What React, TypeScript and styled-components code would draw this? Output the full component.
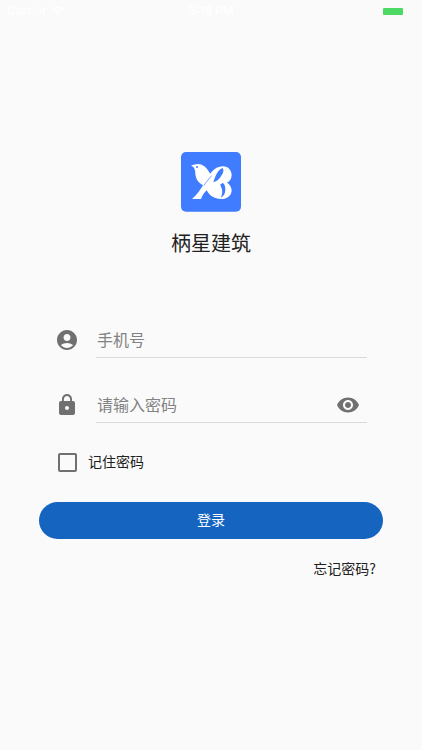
import React, { useState } from "react";
import styled, { createGlobalStyle } from "styled-components";
import { MdAccountCircle, MdLock, MdVisibility, MdWifi } from "react-icons/md";

const GlobalStyle = createGlobalStyle`
  *, *::before, *::after { box-sizing: border-box; }
  body {
    margin: 0;
    background: #fafafa;
    color: #212121;
    font-family: "Noto Sans CJK SC", sans-serif;
  }
  button, input { font: inherit; color: inherit; }
`;

const Page = styled.div`
  min-height: 100vh;
  display: flex;
  flex-direction: column;
`;

const StatusBar = styled.header`
  display: grid;
  grid-template-columns: 1fr auto 1fr;
  align-items: center;
  height: 22px;
  padding: 0 7px;
  color: #fff;
  font: 500 12px/22px Inter, sans-serif;
`;

const Carrier = styled.span`
  display: flex;
  align-items: center;
  gap: 4px;
`;

const Time = styled.span`
  font-weight: 600;
`;

const Battery = styled.span`
  justify-self: end;
  width: 20px;
  height: 7px;
  margin-right: 12px;
  border-radius: 1px;
  background: #4cd964;
`;

const Content = styled.main`
  display: flex;
  flex-direction: column;
  padding: 130px 39px 0;
`;

const Brand = styled.div`
  display: flex;
  flex-direction: column;
  align-items: center;
  gap: 16px;
  margin-bottom: 64px;
`;

const Title = styled.h1`
  margin: 0;
  font-size: 20px;
  line-height: 30px;
  font-weight: 400;
`;

const Form = styled.form`
  display: flex;
  flex-direction: column;
`;

const Fields = styled.div`
  display: flex;
  flex-direction: column;
  gap: 29px;
  padding: 0 16px;
`;

const Field = styled.div`
  display: flex;
  align-items: stretch;
  gap: 16px;
  height: 36px;
  color: #707070;
`;

const FieldIcon = styled.label`
  display: flex;
  align-items: center;
  padding-right: 1px;
`;

const InputLine = styled.div`
  flex: 1;
  display: flex;
  align-items: center;
  min-width: 0;
  padding-right: 7px;
  border-bottom: 1px solid #dadada;
`;

const Input = styled.input`
  flex: 1;
  min-width: 0;
  padding: 0 0 2px 1px;
  border: 0;
  outline: 0;
  background: none;
  color: #212121;
  font-size: 16px;
  line-height: 24px;
  &::placeholder { color: #828282; opacity: 1; }
`;

const IconButton = styled.button`
  display: flex;
  padding: 0;
  border: 0;
  background: none;
  color: #707070;
  cursor: pointer;
`;

const Remember = styled.label`
  align-self: flex-start;
  display: flex;
  align-items: center;
  gap: 11px;
  height: 24px;
  margin: 27px 19px 28px;
  font-size: 14px;
  line-height: 24px;
`;

const RememberText = styled.span`
  padding-bottom: 2px;
`;

const Checkbox = styled.input`
  appearance: none;
  width: 19px;
  height: 19px;
  margin: 0;
  border: 2px solid #707070;
  border-radius: 2px;
  &:checked { background: #1565c0; border-color: #1565c0; }
`;

const Submit = styled.button`
  height: 37px;
  padding: 0 16px 3px;
  border: 0;
  border-radius: 19px;
  background: #1565c0;
  color: #fff;
  font-size: 14px;
  line-height: 20px;
  cursor: pointer;
`;

const Forgot = styled.a`
  align-self: flex-end;
  margin: 17px 7px 0;
  color: inherit;
  font-size: 14px;
  line-height: 24px;
  text-decoration: none;
`;

const Logo = () => (
  <svg width="60" height="60" viewBox="0 0 180 180" role="img" aria-label="柄星建筑">
    <rect width="180" height="179" rx="15" fill="#3f7cff" />
    <path
      fill="#fff"
      d="M30 41 C36 37 44 37 52 36 C66 36 79 49 88 66 L94 78 L69 101 C54 95 45 83 43 66 C43 53 40 44 30 41Z"
    />
    <path
      fill="#fff"
      fillRule="evenodd"
      d="M33 141 C50 127 60 108 71 92 C84 70 97 43 126 43 C142 43 152 56 152 69 C152 80 146 88 138 92 C146 96 152 105 152 116 C151 131 138 141 121 141 C99 141 85 130 77 115 C70 121 64 130 60 141Z
      M124 48 C110 54 103 72 97 91 C108 88 115 81 120 73 C127 63 130 54 124 48Z
      M125 92 C122 95 120 97 117 98 C125 110 126 125 119 137 C129 133 133 125 133 112 C133 103 131 96 125 92Z"
    />
    <path
      d="M92 71 C84 80 76 89 69 101"
      fill="none"
      stroke="#3f7cff"
      strokeWidth="2"
    />
    <circle cx="48" cy="45" r="3" fill="#3f7cff" />
  </svg>
);

export default function App() {
  const [visible, setVisible] = useState(false);
  return (
    <>
      <GlobalStyle />
      <Page>
        <StatusBar>
          <Carrier>
            Carrier
            <MdWifi size={14} />
          </Carrier>
          <Time>5:18 PM</Time>
          <Battery />
        </StatusBar>
        <Content>
          <Brand>
            <Logo />
            <Title>柄星建筑</Title>
          </Brand>
          <Form onSubmit={(e) => e.preventDefault()}>
            <Fields>
              <Field>
                <FieldIcon htmlFor="phone" aria-label="手机号">
                  <MdAccountCircle size={24} />
                </FieldIcon>
                <InputLine>
                  <Input id="phone" type="tel" placeholder="手机号" />
                </InputLine>
              </Field>
              <Field>
                <FieldIcon htmlFor="password" aria-label="密码">
                  <MdLock size={24} />
                </FieldIcon>
                <InputLine>
                  <Input
                    id="password"
                    type={visible ? "text" : "password"}
                    placeholder="请输入密码"
                  />
                  <IconButton
                    type="button"
                    aria-label="显示密码"
                    onClick={() => setVisible(!visible)}
                  >
                    <MdVisibility size={24} />
                  </IconButton>
                </InputLine>
              </Field>
            </Fields>
            <Remember>
              <Checkbox type="checkbox" />
              <RememberText>记住密码</RememberText>
            </Remember>
            <Submit type="submit">登录</Submit>
            <Forgot href="#forgot">忘记密码?</Forgot>
          </Form>
        </Content>
      </Page>
    </>
  );
}
